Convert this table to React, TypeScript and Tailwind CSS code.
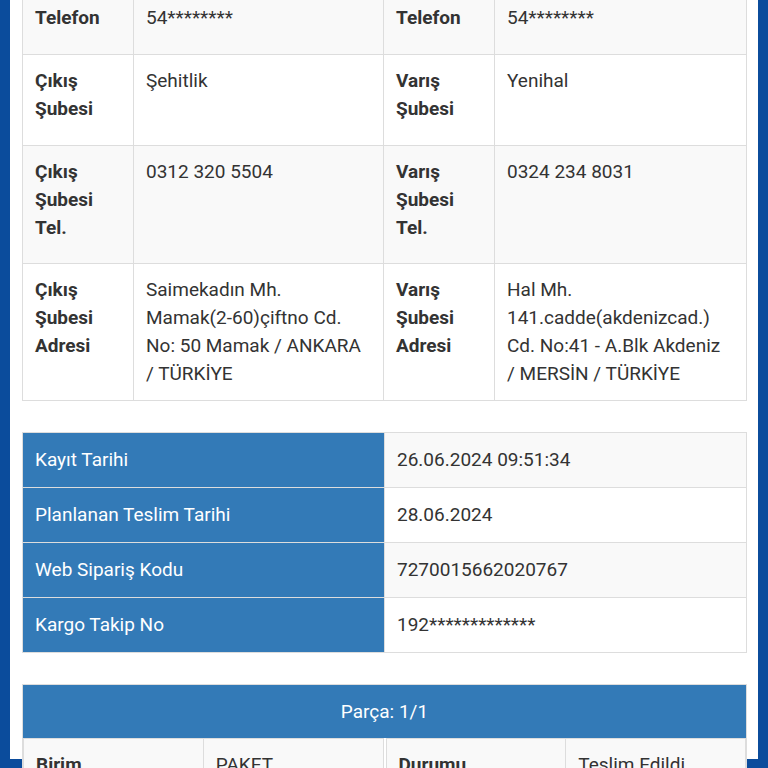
const FONT = "font-['Roboto','Liberation_Sans',sans-serif]";

type Row = { l1: string; v1: string[]; l2: string; v2: string[]; pad: string };

const BRANCH_ROWS: Row[] = [
  { l1: "Telefon", v1: ["54********"], l2: "Telefon", v2: ["54********"], pad: "pb-[22px]" },
  { l1: "Çıkış Şubesi", v1: ["Şehitlik"], l2: "Varış Şubesi", v2: ["Yenihal"], pad: "pb-[22px]" },
  { l1: "Çıkış Şubesi Tel.", v1: ["0312 320 5504"], l2: "Varış Şubesi Tel.", v2: ["0324 234 8031"], pad: "pb-[21px]" },
  {
    l1: "Çıkış Şubesi Adresi",
    v1: ["Saimekadın Mh.", "Mamak(2-60)çiftno Cd.", "No: 50 Mamak / ANKARA", "/ TÜRKİYE"],
    l2: "Varış Şubesi Adresi",
    v2: ["Hal Mh.", "141.cadde(akdenizcad.)", "Cd. No:41 - A.Blk Akdeniz", "/ MERSİN / TÜRKİYE"],
    pad: "pb-[12px]",
  },
];

const INFO_ROWS: { label: string; value: string }[] = [
  { label: "Kayıt Tarihi", value: "26.06.2024 09:51:34" },
  { label: "Planlanan Teslim Tarihi", value: "28.06.2024" },
  { label: "Web Sipariş Kodu", value: "7270015662020767" },
  { label: "Kargo Takip No", value: "192*************" },
];

function Label({ words, pad }: { words: string; pad: string }) {
  return (
    <td className={`border border-[#dddddd] align-top pl-[12px] pr-2 pt-[12px] ${pad} font-bold`}>
      {words.split(" ").map((w, i) => (
        <div key={i}>{w}</div>
      ))}
    </td>
  );
}

function Value({ lines, pad }: { lines: string[]; pad: string }) {
  return (
    <td className={`border border-[#dddddd] align-top pl-[12px] pr-2 pt-[12px] ${pad}`}>
      {lines.map((l, i) => (
        <div key={i}>{l}</div>
      ))}
    </td>
  );
}

function PartCell({ label, value }: { label: string; value: string }) {
  return (
    <table className="w-full table-fixed border-collapse">
      <tbody>
        <tr className="bg-[#f9f9f9]">
          <td className="border border-[#dddddd] align-top pl-[12px] py-[12px] font-bold">{label}</td>
          <td className="border border-[#dddddd] align-top pl-[12px] py-[12px]">{value}</td>
        </tr>
      </tbody>
    </table>
  );
}

export default function App() {
  return (
    <div className={`w-[768px] h-[768px] overflow-hidden bg-[#0b4c9c] px-[10px] ${FONT}`}>
      <div className="h-full bg-white pl-[12px] pr-[11px] text-[19px] leading-[28px] text-[#333333]">
        <table className="w-full table-fixed border-collapse -mt-[9px]">
          <colgroup>
            <col className="w-[111px]" />
            <col className="w-[250px]" />
            <col className="w-[111px]" />
            <col />
          </colgroup>
          <tbody>
            {BRANCH_ROWS.map((r, i) => (
              <tr key={i} className={i % 2 === 0 ? "bg-[#f9f9f9]" : "bg-white"}>
                <Label words={r.l1} pad={r.pad} />
                <Value lines={r.v1} pad={r.pad} />
                <Label words={r.l2} pad={r.pad} />
                <Value lines={r.v2} pad={r.pad} />
              </tr>
            ))}
          </tbody>
        </table>

        <table className="w-full table-fixed border-collapse mt-[31px]">
          <colgroup>
            <col className="w-[362px]" />
            <col />
          </colgroup>
          <tbody>
            {INFO_ROWS.map((r, i) => (
              <tr key={r.label}>
                <td className="border border-[#dddddd] bg-[#337ab7] text-white pl-[12px] py-[13px]">{r.label}</td>
                <td className={`border border-[#dddddd] pl-[12px] py-[13px] ${i % 2 === 0 ? "bg-[#f9f9f9]" : "bg-white"}`}>
                  {r.value}
                </td>
              </tr>
            ))}
          </tbody>
        </table>

        <div className="mt-[31px] border border-[#dddddd]">
          <div className="bg-[#337ab7] text-white h-[53px] flex items-center justify-center">Parça: 1/1</div>
          <div className="grid grid-cols-2 gap-[2px] bg-white">
            <PartCell label="Birim" value="PAKET" />
            <PartCell label="Durumu" value="Teslim Edildi" />
          </div>
        </div>
      </div>
    </div>
  );
}
